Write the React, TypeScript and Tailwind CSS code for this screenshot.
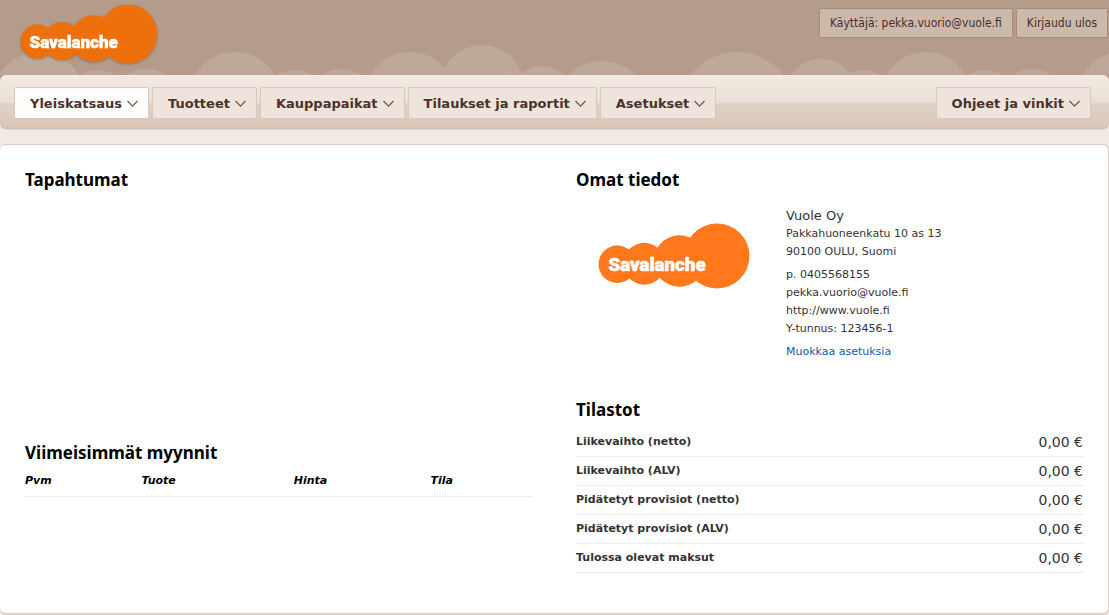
/**
 * OverviewPage
 * Merchant dashboard: recent events, latest sales, company details and statistics.
 */

interface MenuItem {
  label: string;
  active?: boolean;
}

const MENU: MenuItem[] = [
  { label: 'Yleiskatsaus', active: true },
  { label: 'Tuotteet' },
  { label: 'Kauppapaikat' },
  { label: 'Tilaukset ja raportit' },
  { label: 'Asetukset' },
];

const STATS = [
  { label: 'Liikevaihto (netto)', value: '0,00 €' },
  { label: 'Liikevaihto (ALV)', value: '0,00 €' },
  { label: 'Pidätetyt provisiot (netto)', value: '0,00 €' },
  { label: 'Pidätetyt provisiot (ALV)', value: '0,00 €' },
  { label: 'Tulossa olevat maksut', value: '0,00 €' },
];

// cx, top edge and radius of each hill behind the header
const HILLS = [
  [39, 7, 46],
  [98, 25, 35],
  [146, 24, 35],
  [235, 7, 46],
  [295, 25, 35],
  [342, 24, 35],
  [410, 7, 46],
  [482, 0, 42],
  [542, 21, 31],
  [602, 16, 48],
  [737, 7, 58],
  [821, 14, 36],
  [863, 25, 35],
  [926, 7, 46],
  [985, 25, 35],
  [1032, 24, 35],
  [1122, 7, 46],
];

const HEADING = "font-['Noto_Sans','DejaVu_Sans',sans-serif] text-[17px] leading-5 font-bold text-black";

function Logo({ className }: { className: string }) {
  return (
    <svg viewBox="0 0 138 61" className={className} role="img" aria-label="Savalanche">
      <g fill="currentColor">
        <circle cx="17.5" cy="37.5" r="17" />
        <circle cx="42" cy="37" r="19" />
        <circle cx="74" cy="34.5" r="23.3" />
        <circle cx="108" cy="30" r="29.5" />
      </g>
      <text
        x="9.5"
        y="43.5"
        fill="#fff"
        stroke="#fff"
        strokeWidth="0.5"
        fontSize="17"
        fontWeight="900"
        fontFamily="Roboto, 'Liberation Sans', sans-serif"
      >
        Savalanche
      </text>
    </svg>
  );
}

function MenuButton({ label, active }: MenuItem) {
  return (
    <button
      type="button"
      className={`flex h-8 items-center gap-1 rounded-xs border border-[#d9c8bc] pt-0.5 pr-[9px] pl-[15px] text-[13px] font-bold whitespace-nowrap text-[#4a332a] ${
        active ? 'bg-[#fffdfc]' : 'bg-[#efe4dc]'
      }`}
    >
      {label}
      <svg width="13" height="8" viewBox="0 0 13 8" fill="none" stroke="#6f5548" strokeWidth="1.2">
        <path d="M1.5 1 6.5 6.2 11.5 1" />
      </svg>
    </button>
  );
}

export default function OverviewPage() {
  return (
    <div className="min-h-screen bg-[#f2e9e2] font-['DejaVu_Sans',Verdana,sans-serif] text-[#333]">
      {/* Header */}
      <div className="bg-linear-to-b from-[#b59b8a] from-80% to-[#f2e9e2] to-80%">
        <header className="relative flex h-[75px] items-start justify-between">
          <svg className="absolute bottom-0 left-0 h-[30px] w-full" aria-hidden="true">
            <g fill="#bda899">
              {HILLS.map(([cx, top, r]) => (
                <circle key={cx} cx={cx} cy={top + r} r={r} />
              ))}
            </g>
          </svg>
          <a href="#" className="relative mt-1 ml-5">
            <Logo className="w-[138px] text-[#ee700c] drop-shadow-[0_1px_1px_rgba(90,60,40,0.4)]" />
          </a>
          <div className="relative mt-2 mr-px flex gap-[3px] font-['DejaVu_Sans_Condensed','DejaVu_Sans',sans-serif] text-[12px] text-[#4a2f28]">
            <a
              href="#"
              className="flex h-[30px] items-center rounded-xs border border-[#a48b7c] bg-[#cbb9ac] px-[10px]"
            >
              Käyttäjä: pekka.vuorio@vuole.fi
            </a>
            <button
              type="button"
              className="h-[30px] rounded-xs border border-[#a48b7c] bg-[#cbb9ac] px-[10px]"
            >
              Kirjaudu ulos
            </button>
          </div>
        </header>

        {/* Main menu */}
        <nav className="flex h-[54px] items-start gap-[3px] rounded-md border-b border-[#d3c2b6] bg-[linear-gradient(#f2e9e2,#e9dfd6_52%,#dfd1c6_54%,#d9c6b8)] pt-3 pr-[18px] pl-[14px] shadow-[0_1px_0_#e2d5cb]">
          {MENU.map((item) => (
            <MenuButton key={item.label} {...item} />
          ))}
          <div className="ml-auto">
            <MenuButton label="Ohjeet ja vinkit" />
          </div>
        </nav>
      </div>

      {/* Content */}
      <main className="mt-[15px] grid grid-cols-2 gap-x-11 rounded-md border border-l-0 border-[#dccbc0] bg-white pt-[25px] pr-[25px] pb-10 pl-[25px] shadow-[0_1px_0_#e2d5cb]">
        <div>
          <section className="h-[273px]">
            <h2 className={HEADING}>Tapahtumat</h2>
          </section>

          <section>
            <h2 className={HEADING}>Viimeisimmät myynnit</h2>
            <table className="w-full table-fixed text-left text-[11px] leading-4 text-black italic">
              <thead>
                <tr className="border-b border-[#ececec]">
                  <th className="w-[23%] pt-[10px] pb-[7px]">Pvm</th>
                  <th className="w-[30%] pt-[10px] pb-[7px]">Tuote</th>
                  <th className="w-[27%] pt-[10px] pb-[7px]">Hinta</th>
                  <th className="pt-[10px] pb-[7px]">Tila</th>
                </tr>
              </thead>
            </table>
          </section>
        </div>

        <div>
          <section className="h-[230px]">
            <h2 className={HEADING}>Omat tiedot</h2>
            <div className="mt-[17px] flex">
              <div className="w-[210px] pt-4 pl-[22px]">
                <Logo className="w-[152px] text-[#ff781b]" />
              </div>
              <div className="flex-1 text-[11px] leading-[18px]">
                <p className="text-[13px]">Vuole Oy</p>
                <p>Pakkahuoneenkatu 10 as 13</p>
                <p>90100 OULU, Suomi</p>
                <p className="mt-[5px]">p. 0405568155</p>
                <p>pekka.vuorio@vuole.fi</p>
                <p>http://www.vuole.fi</p>
                <p>Y-tunnus: 123456-1</p>
                <a href="#" className="mt-[5px] inline-block text-[#0e5ba8]">
                  Muokkaa asetuksia
                </a>
              </div>
            </div>
          </section>

          <section>
            <h2 className={HEADING}>Tilastot</h2>
            <table className="mt-[7px] w-full">
              <tbody>
                {STATS.map((stat) => (
                  <tr key={stat.label} className="h-[29px] border-b border-[#ececec]">
                    <th scope="row" className="pt-0.5 text-left text-[11px] font-bold">
                      {stat.label}
                    </th>
                    <td className="pt-0.5 text-right text-[14px]">{stat.value}</td>
                  </tr>
                ))}
              </tbody>
            </table>
          </section>
        </div>
      </main>
    </div>
  );
}
